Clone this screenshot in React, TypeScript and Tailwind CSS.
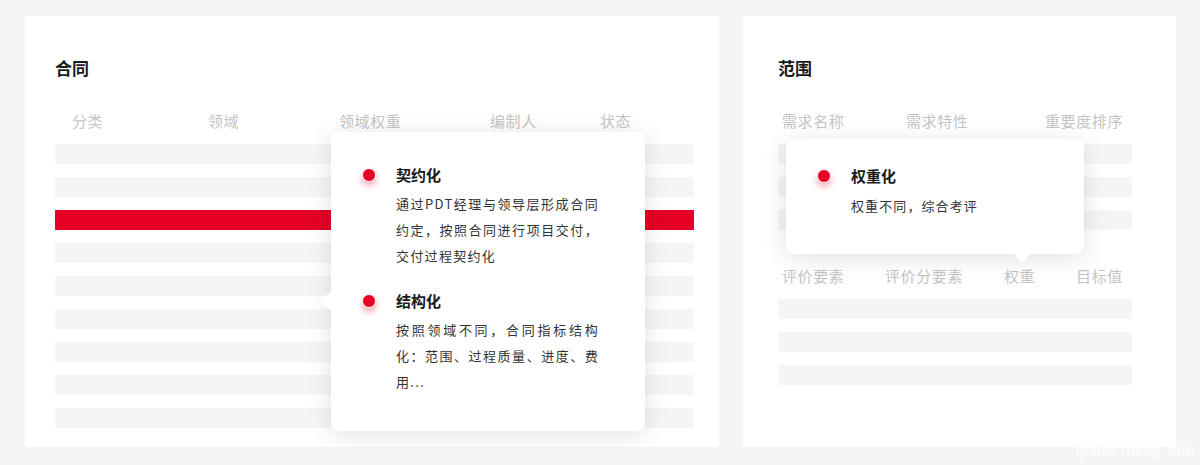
const FONT = { fontFamily: '"Noto Sans CJK SC", "Noto Sans", sans-serif' };

const LEFT_ROWS = [false, false, true, false, false, false, false, false, false];

function Dot() {
  return (
    <span className="block w-[14px] h-[14px] rounded-full bg-[#e60026] border-[1.5px] border-white shadow-[0_4px_7px_rgba(230,0,38,0.35)] shrink-0" />
  );
}

function TipItem({ title, body, justify }: { title: string; body: string; justify?: boolean }) {
  return (
    <div className="flex">
      <div className="w-[34px] flex items-start pt-[4px]">
        <Dot />
      </div>
      <div>
        <div className="text-[15px] leading-[22px] font-bold text-[#1a1a1a]">{title}</div>
        <p
          className={`mt-[5px] w-[203px] text-[13px] leading-[26px] tracking-[1.3px] text-[#333] ${
            justify ? "text-justify" : ""
          }`}
        >
          {body}
        </p>
      </div>
    </div>
  );
}

function Rows({ flags, width }: { flags: boolean[]; width: string }) {
  return (
    <div className={`flex flex-col gap-[13px] ${width}`}>
      {flags.map((red, i) => (
        <div key={i} className={`h-5 ${red ? "bg-[#e60026]" : "bg-[#f4f5f5]"}`} />
      ))}
    </div>
  );
}

function Header({ cols }: { cols: { label: string; w: string }[] }) {
  return (
    <div className="flex pl-[4px] text-[15px] leading-[22px] tracking-[0.6px] text-[#c4c4c4]">
      {cols.map((c) => (
        <span key={c.label} className={`${c.w} shrink-0`}>
          {c.label}
        </span>
      ))}
    </div>
  );
}

export default function App() {
  return (
    <div className="relative w-[1200px] h-[465px] bg-[#f4f5f5] flex gap-6 pt-4 pl-[25px]" style={FONT}>
      {/* 合同 */}
      <section className="relative w-[694px] h-[431px] bg-white pt-[40px] pl-[30px]">
        <h2 className="text-[17px] leading-[24px] font-bold text-[#1a1a1a]">合同</h2>
        <div className="mt-[30px] pl-[13px]">
          <Header
            cols={[
              { label: "分类", w: "w-[136px]" },
              { label: "领域", w: "w-[131px]" },
              { label: "领域权重", w: "w-[151px]" },
              { label: "编制人", w: "w-[110px]" },
              { label: "状态", w: "w-[40px]" },
            ]}
          />
        </div>
        <div className="mt-[12px]">
          <Rows flags={LEFT_ROWS} width="w-[639px]" />
        </div>

        <div className="absolute left-[306px] top-[116px] w-[314px] h-[299px] bg-white rounded-lg shadow-[0_4px_24px_rgba(0,0,0,0.12)] pt-[32px] pl-[31px]">
          <svg className="absolute left-[-13px] top-[160px]" width="13" height="18" viewBox="0 0 13 18">
            <path d="M13 0 L0 9 L13 18 Z" fill="#fff" />
          </svg>
          <TipItem title="契约化" body="通过PDT经理与领导层形成合同约定，按照合同进行项目交付，交付过程契约化" justify />
          <div className="mt-[21px]">
            <TipItem title="结构化" body="按照领域不同，合同指标结构化：范围、过程质量、进度、费用..." justify />
          </div>
        </div>
      </section>

      {/* 范围 */}
      <section className="relative w-[433px] h-[431px] bg-white pt-[40px] pl-[35px]">
        <h2 className="text-[17px] leading-[24px] font-bold text-[#1a1a1a]">范围</h2>
        <div className="mt-[30px]">
          <Header
            cols={[
              { label: "需求名称", w: "w-[124px]" },
              { label: "需求特性", w: "w-[139px]" },
              { label: "重要度排序", w: "w-[82px]" },
            ]}
          />
        </div>
        <div className="mt-[12px]">
          <Rows flags={[false, false, false]} width="w-[354px]" />
        </div>
        <div className="mt-[35px]">
          <Header
            cols={[
              { label: "评价要素", w: "w-[103px]" },
              { label: "评价分要素", w: "w-[119px]" },
              { label: "权重", w: "w-[72px]" },
              { label: "目标值", w: "w-[50px]" },
            ]}
          />
        </div>
        <div className="mt-[12px]">
          <Rows flags={[false, false, false]} width="w-[354px]" />
        </div>

        <div className="absolute left-[43px] top-[123px] w-[298px] h-[115px] bg-white rounded-lg shadow-[0_4px_24px_rgba(0,0,0,0.12)] pt-[26px] pl-[31px]">
          <svg className="absolute left-[228px] top-[115px]" width="16" height="9" viewBox="0 0 16 9">
            <path d="M0 0 L8 9 L16 0 Z" fill="#fff" />
          </svg>
          <div className="flex">
            <div className="w-[34px] flex items-start pt-[4px]">
              <Dot />
            </div>
            <div>
              <div className="text-[15px] leading-[22px] font-bold text-[#1a1a1a]">权重化</div>
              <p className="mt-[6px] text-[13px] leading-[26px] tracking-[1.1px] text-[#333]">权重不同，综合考评</p>
            </div>
          </div>
        </div>
      </section>

      <span
        className="absolute left-[1076px] top-[443px] text-[14px] leading-[16px] text-white"
        style={{ fontFamily: '"Liberation Mono", monospace' }}
      >
        goubeiheng.com
      </span>
    </div>
  );
}
